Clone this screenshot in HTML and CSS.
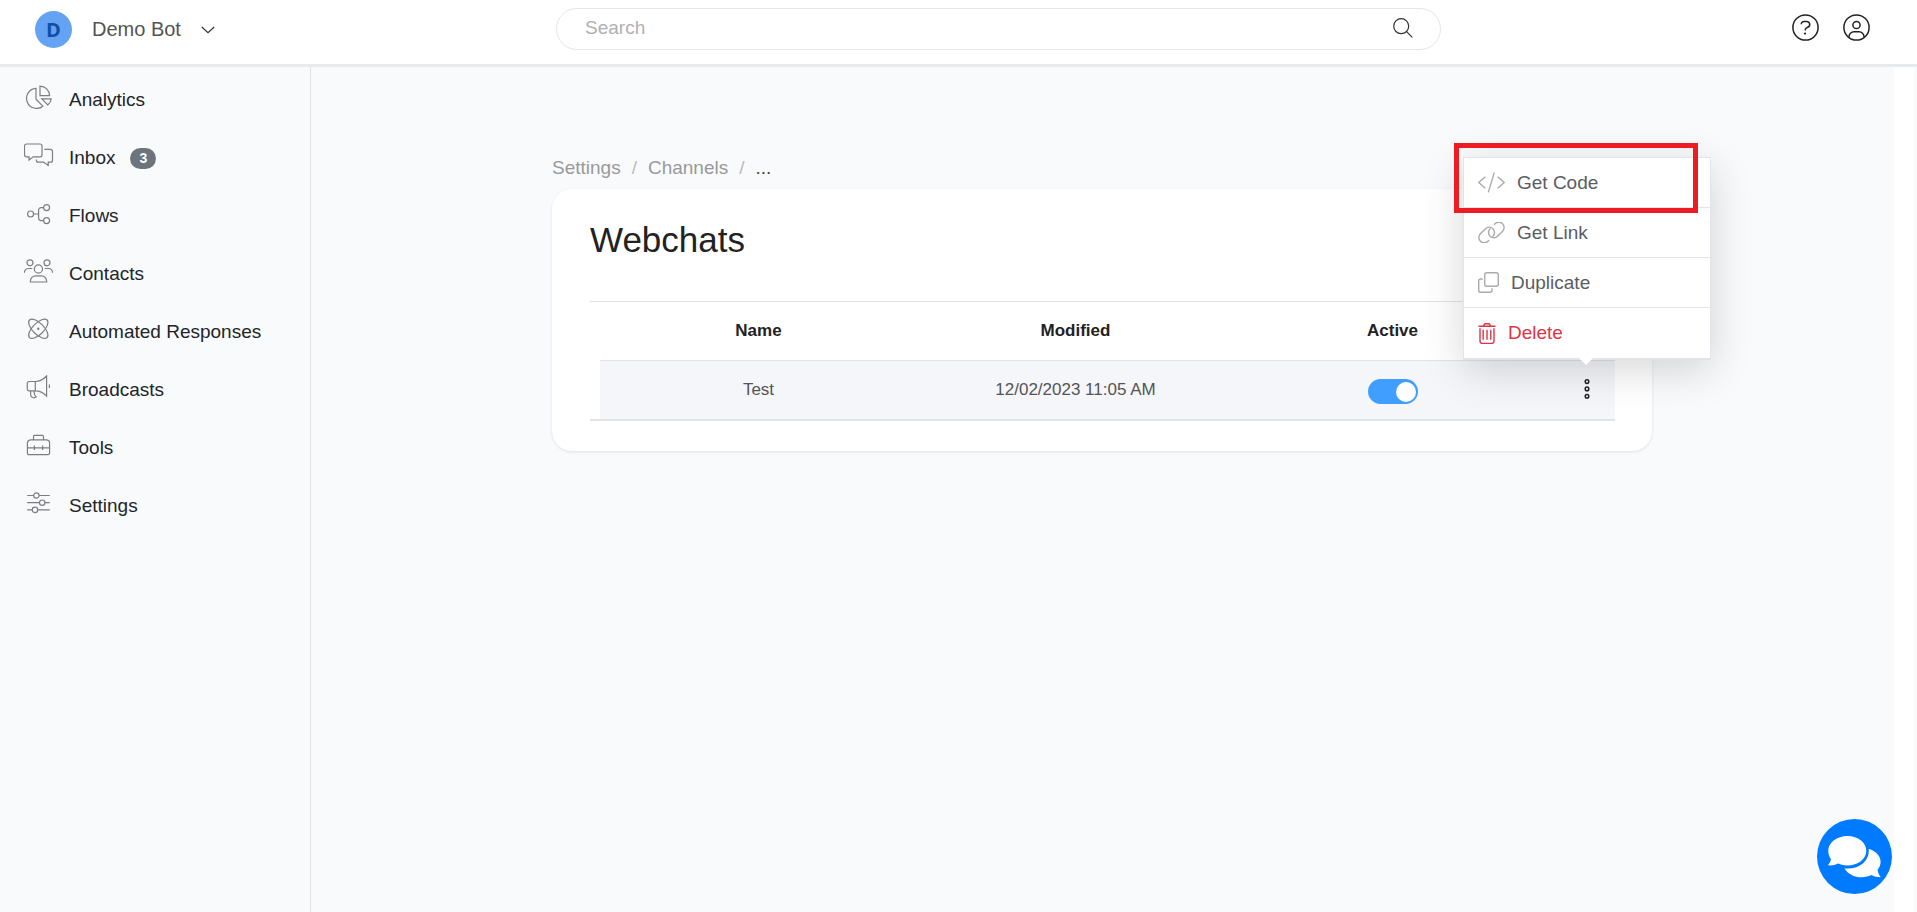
FILE: index.html
```html
<!DOCTYPE html>
<html lang="en">
<head>
<meta charset="utf-8">
<title>Webchats</title>
<link rel="stylesheet" href="styles.css">
</head>
<body>
<header class="topbar">
  <button class="brand" type="button">
    <span class="avatar">D</span>
    <span>Demo Bot</span>
    <svg class="chevron" width="14" height="8" viewBox="0 0 14 8"><path d="M.8 1 7 6.8 13.2 1"/></svg>
  </button>
  <form class="search" role="search">
    <input class="search-input" type="search" placeholder="Search" aria-label="Search">
    <button class="icon-button" type="submit" aria-label="Submit search">
      <svg width="20" height="20" viewBox="0 0 20 20"><circle cx="8.2" cy="8.2" r="7.5"/><path d="m13.6 13.6 5.7 5.7"/></svg>
    </button>
  </form>
  <div class="actions">
    <button class="icon-button strong" type="button" aria-label="Help">
      <svg width="27" height="27" viewBox="0 0 27 27"><circle cx="13.5" cy="13.5" r="12.6"/><path d="M9.3 10.3V10a2.6 2.6 0 0 1 2.6-2.6h2.8a3 3 0 0 1 1.5 5.6l-2 1.2a1.7 1.7 0 0 0-.9 1.5v.9"/><circle class="solid" cx="13" cy="19.6" r="1.1"/></svg>
    </button>
    <button class="icon-button strong" type="button" aria-label="Account">
      <svg width="27" height="27" viewBox="0 0 27 27"><circle cx="13.5" cy="13.5" r="12.6"/><circle cx="13.5" cy="11" r="3.6"/><path d="M6 23.4v-.6a5 5 0 0 1 5-5h5a5 5 0 0 1 5 5v.6"/></svg>
    </button>
  </div>
</header>
<div class="layout">
  <nav class="sidebar">
    <a class="nav-item" href="#analytics"><svg class="nav-icon" viewBox="0 0 30 24"><path d="M12 3.4v10.800l6.800 7A10 10 0 1 1 12 3.400z"/><path d="M16 1.200v9.400h9.600A9.600 9.600 0 0 0 16 1.200z"/><path d="M17.800 13.800h9.400a8.600 8.600 0 0 1-3.400 6.100z"/></svg>Analytics</a>
    <a class="nav-item" href="#inbox"><svg class="nav-icon" viewBox="0 0 30 24"><path d="M2.5 1H16a2 2 0 0 1 2 2v8.8a2 2 0 0 1-2 2H9.200L5 17v-3.200H2.500a2 2 0 0 1-2-2V3a2 2 0 0 1 2-2z"/><path d="M20.400 6.400h6.100a2 2 0 0 1 2 2v8.800a2 2 0 0 1-2 2h-2.300v3.200L19.600 19.200h-5.200a2 2 0 0 1-2-2v-.8"/></svg>Inbox<span class="badge">3</span></a>
    <a class="nav-item" href="#flows"><svg class="nav-icon" viewBox="0 0 30 24"><circle cx="6.6" cy="13" r="3"/><circle cx="22.6" cy="6.6" r="3"/><circle cx="22.6" cy="19.6" r="3"/><path d="M9.600 13h5M19.600 6.600h-2.500a2.500 2.500 0 0 0-2.500 2.500v8a2.500 2.500 0 0 0 2.500 2.500h2.500"/></svg>Flows</a>
    <a class="nav-item" href="#contacts"><svg class="nav-icon" viewBox="0 0 30 24"><circle cx="14.4" cy="10" r="4.1"/><circle cx="6" cy="3.8" r="3"/><circle cx="23" cy="3.8" r="3"/><path d="M.5 13.800v-.6a3.700 3.700 0 0 1 3.700-3.700h4M28.500 13.800v-.6a3.700 3.700 0 0 0-3.700-3.700h-4M6.400 23v-1a5.200 5.200 0 0 1 5.200-5.200h5.800a5.200 5.200 0 0 1 5.200 5.200v1z"/></svg>Contacts</a>
    <a class="nav-item" href="#responses"><svg class="nav-icon" viewBox="0 0 30 24"><ellipse cx="14.3" cy="11.8" rx="12.4" ry="5.6" transform="rotate(45 14.3 11.8)"/><ellipse cx="14.3" cy="11.8" rx="12.4" ry="5.6" transform="rotate(-45 14.3 11.8)"/><circle cx="14.3" cy="11.8" r=".6"/></svg>Automated Responses</a>
    <a class="nav-item" href="#broadcasts"><svg class="nav-icon" viewBox="0 0 30 24"><path d="M5 6.500h6.300v9.300H5a1.700 1.700 0 0 1-1.700-1.700V8.200A1.700 1.700 0 0 1 5 6.500zM11.300 6.500c4.500 0 8-2 11.300-5.500v20c-3.300-3.400-6.800-5.200-11.300-5.200M25.400 9.500v3.500M6.600 15.800v3.700a3.300 3.300 0 0 0 5.600 2.300c-2-1.500-2.400-3.500-2-6"/></svg>Broadcasts</a>
    <a class="nav-item" href="#tools"><svg class="nav-icon" viewBox="0 0 30 24"><path d="M6.800 6.800h15.400a3.400 3.400 0 0 1 3.400 3.400v9.800a1.700 1.700 0 0 1-1.700 1.700H5.100A1.700 1.700 0 0 1 3.400 20v-9.800a3.400 3.400 0 0 1 3.400-3.400zM9.500 6.800V3.400a1 1 0 0 1 1-1h8a1 1 0 0 1 1 1v3.400M3.400 14.800h22.200M10.400 12.500v4.600M18.600 12.500v4.600"/></svg>Tools</a>
    <a class="nav-item" href="#settings"><svg class="nav-icon" viewBox="0 0 30 24"><circle cx="12.4" cy="4.5" r="2.7"/><circle cx="18.2" cy="11.7" r="2.7"/><circle cx="11" cy="18.9" r="2.7"/><path d="M3.200 4.500h6.500M15.100 4.500h10.700M3.200 11.700h12.300M20.900 11.700h4.900M3.200 18.900h5.100M13.700 18.900h12.100"/></svg>Settings</a>
  </nav>
  <main class="main">
    <div class="content">
      <nav class="crumbs" aria-label="Breadcrumb">
        <a href="#settings">Settings</a><span class="slash">/</span><a href="#channels">Channels</a><span class="slash">/</span><span class="current">...</span>
      </nav>
      <section class="card">
        <h1 class="title">Webchats</h1>
        <table class="table">
          <thead>
            <tr><td class="gutter"></td><th>Name</th><th>Modified</th><th>Active</th><td class="menu-col"></td></tr>
          </thead>
          <tbody>
            <tr>
              <td class="gutter"></td>
              <td>Test</td>
              <td>12/02/2023 11:05 AM</td>
              <td><input class="toggle" type="checkbox" checked aria-label="Active"></td>
              <td class="menu-col">
                <button class="icon-button strong" type="button" aria-label="More actions"><svg width="6" height="20" viewBox="0 0 6 20"><circle cx="3" cy="2.6" r="1.8"/><circle cx="3" cy="9.9" r="1.8"/><circle cx="3" cy="17.2" r="1.8"/></svg></button>
                <div class="popover">
                  <button class="option" type="button"><svg width="27" height="21" viewBox="0 0 27 21"><path d="M7.300 4.800.8 10.500l6.500 5.700M19.700 4.800l6.500 5.700-6.500 5.700M16.300.6l-6 19.800"/></svg>Get Code</button>
                  <button class="option" type="button"><svg width="27" height="21" viewBox="0 0 27 21"><path d="M11.200 18.200 10 19.200a5.300 5.300 0 0 1-7.600-7.500l5-5a5.300 5.300 0 0 1 7.500 0 5.300 5.300 0 0 1 0 7.500l-.4.4"/><path d="M15.800 2.800 17 1.800a5.300 5.300 0 0 1 7.600 7.500l-5 5a5.300 5.300 0 0 1-7.500 0 5.300 5.300 0 0 1 0-7.500l.4-.4"/></svg>Get Link</button>
                  <button class="option" type="button"><svg width="21" height="21" viewBox="0 0 21 21"><rect x="6.7" y=".7" width="13.600" height="13.600" rx="2"/><path d="M4.800 7H2.700a2 2 0 0 0-2 2v9.300a2 2 0 0 0 2 2H12a2 2 0 0 0 2-2v-2.100"/></svg>Duplicate</button>
                  <button class="option danger" type="button"><svg width="18" height="21" viewBox="0 0 18 21"><path d="M.5 3.300h17M5.200 3.300 6.300 1.400a1.300 1.300 0 0 1 1.100-.7h3.200a1.300 1.300 0 0 1 1.100.7l1.100 1.900M2 5.300v12.900a2.200 2.200 0 0 0 2.200 2.200h9.600a2.200 2.200 0 0 0 2.200-2.200V5.300M5.200 6.800v10M9 6.800v10M12.800 6.800v10"/></svg>Delete</button>
                  <span class="highlight"></span>
                </div>
              </td>
            </tr>
          </tbody>
        </table>
      </section>
    </div>
  </main>
</div>
<button class="chat" type="button" aria-label="Open chat">
  <svg width="54" height="42" viewBox="0 0 54 42"><path d="M20.500 0C31 0 39.300 6.500 39.300 14.700S31 29.400 20.500 29.400c-3.400 0-6.600-.7-9.400-1.900C8 29.200 4.300 29.700.8 29.300c1.500-1.600 2.700-3.500 3.200-6C2.500 20.800 1.200 18 1.200 14.700 1.200 6.500 10 0 20.500 0z"/><path d="M41.800 12.800c7 2.200 11.800 7.200 11.800 13 0 3.200-1.200 5.800-3.100 8.200.5 2.700 1.700 5.100 3.200 7.200-3.400 0-6.600-.7-9.400-2.200-2.800 1.400-5.900 2.200-9.300 2.200-8 0-14.800-3.600-17.500-8.800 1.500.2 2.300.2 3.500.2 12.100 0 20.800-7.700 20.800-17.800 0-.7 0-1.300 0-2z"/></svg>
</button>
</body>
</html>
```
FILE: styles.css
```css
* { box-sizing: border-box; }

body {
  margin: 0;
  min-height: 100vh;
  display: flex;
  flex-direction: column;
  background: #f9fafc;
  color: #212529;
  font: 19px/24px "Liberation Sans", Arial, sans-serif;
}

button, input { font: inherit; }
a { color: inherit; text-decoration: none; }
svg {
  display: block;
  flex: none;
  fill: none;
  stroke: currentColor;
  stroke-width: 1.2;
}

.topbar {
  display: grid;
  grid-template-columns: 556fr 885fr 476fr;
  align-items: center;
  height: 67px;
  padding-bottom: 6px;
  background: #fff;
  border-bottom: 3px solid #e9eaed;
}

.brand {
  display: flex;
  align-items: center;
  gap: 20px;
  padding: 0 0 0 35px;
  border: 0;
  background: none;
  color: #545454;
  font-size: 20px;
}

.avatar {
  width: 37px;
  height: 37px;
  border-radius: 50%;
  background: #64a3f4;
  color: #0f4ea6;
  font: bold 20px/37px "Open Sans", sans-serif;
  text-align: center;
}

.chevron { color: #333; margin-top: 2px; }

.search {
  display: flex;
  align-items: center;
  height: 42px;
  padding: 0 27px 2px 28px;
  border: 1px solid #e6e6e6;
  border-radius: 21px;
}

.search-input {
  flex: 1;
  min-width: 0;
  padding: 0;
  border: 0;
  outline: 0;
  background: none;
}
.search-input::placeholder { color: #b0b0b0; opacity: 1; }

.icon-button {
  padding: 0;
  border: 0;
  background: none;
  color: #333;
}
.strong { color: #222; }
.strong svg { stroke-width: 1.5; }
.strong .solid { fill: currentColor; stroke: none; }

.actions {
  display: flex;
  justify-content: flex-end;
  gap: 24px;
  padding: 0 47px 4px 0;
}

.layout {
  flex: 1;
  display: flex;
  padding-right: 3px;
}

.sidebar {
  flex: none;
  width: 311px;
  padding-top: 4px;
  border-right: 1px solid #dfe0e3;
}

.nav-item {
  display: flex;
  align-items: center;
  height: 58px;
  padding-left: 24px;
}

.nav-icon {
  width: 30px;
  height: 24px;
  margin: 0 15px 6px 0;
  color: #7b7e82;
}

.badge {
  margin-left: 15px;
  padding: 0 9px;
  border-radius: 11px;
  background: #6c757d;
  color: #fff;
  font-size: 14px;
  font-weight: bold;
  line-height: 21px;
}

.main {
  flex: 1;
  padding: 89px 1px 0 0;
  border-right: 20px solid #fff;
}

.content {
  max-width: 1100px;
  margin: 0 auto;
}

.crumbs {
  display: flex;
  gap: 11px;
  margin-bottom: 9px;
  color: #999;
}
.slash { color: #b8bcc0; }
.current { color: #444; }

.card {
  padding: 30px 37px 30px 38px;
  border-radius: 20px;
  background: #fff;
  box-shadow: 0 1px 3px rgba(0, 0, 0, .1);
}

.title {
  margin: 0 0 40px;
  font-size: 35px;
  font-weight: normal;
  line-height: 42px;
  color: #222;
}

.table {
  width: 100%;
  table-layout: fixed;
  border-spacing: 0;
  font-size: 17px;
  text-align: center;
}
.table th, .table td { padding: 0; }
.table thead th, .table thead td {
  height: 60px;
  border-top: 1px solid #e3e3e3;
  border-bottom: 1px solid #e3e3e3;
  color: #222;
}
.table tbody td {
  height: 60px;
  background: #f5f6fa;
  border-bottom: 2px solid #e3e4e8;
  color: #545454;
}
.table .gutter { width: 10px; }
.table thead .gutter { border-bottom-color: transparent; }
.table tbody .gutter { background: #fff; }
.table .menu-col {
  position: relative;
  width: 64px;
  padding: 0 0 4px 8px;
}
.menu-col .icon-button { vertical-align: middle; }

.toggle {
  appearance: none;
  display: block;
  width: 50px;
  height: 25px;
  margin: 2px auto 0;
  padding: 3px 2px;
  border-radius: 13px;
  background: #409eff;
}
.toggle::before {
  content: "";
  display: block;
  width: 20px;
  height: 20px;
  margin-left: auto;
  border-radius: 50%;
  background: #fff;
}

.popover {
  position: absolute;
  right: -96px;
  bottom: calc(100% + 1px);
  width: 248px;
  border: 1px solid #e3e4ea;
  border-bottom-width: 2px;
  background: #fff;
  box-shadow: 0 10px 40px rgba(0, 0, 0, .16);
}
.popover::after {
  content: "";
  position: absolute;
  top: 100%;
  right: 117px;
  border: 7px solid transparent;
  border-top-color: #fff;
  border-bottom: 0;
}

.option {
  display: flex;
  align-items: center;
  gap: 12px;
  width: 100%;
  height: 50px;
  padding: 0 14px;
  border: 0;
  border-bottom: 1px solid #e3e4e8;
  background: none;
  color: #5a5d61;
  font-size: 19px;
}
.option svg { color: #aaa; stroke-width: 1.4; }
.option:nth-child(4) { border-bottom: 0; }
.option.danger, .option.danger svg { color: #dc3545; }

.highlight {
  position: absolute;
  top: -15px;
  left: -10px;
  width: 244px;
  height: 70px;
  border: 5px solid #ed1c24;
  pointer-events: none;
}

.chat {
  position: fixed;
  right: 25px;
  bottom: 18px;
  display: flex;
  align-items: center;
  justify-content: center;
  width: 75px;
  height: 75px;
  padding: 0 2px 0 0;
  border: 0;
  border-radius: 50%;
  background: #007bff;
}
.chat svg { fill: #fff; stroke: none; }
```
